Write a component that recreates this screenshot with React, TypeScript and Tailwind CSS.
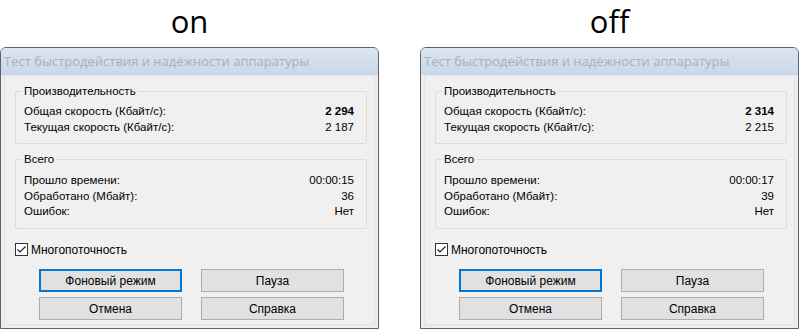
import React from "react";

type Row = { label: string; value: string; bold?: boolean };

const panels = [
    {
        title: "on",
        perf: [
            { label: "Общая скорость (Кбайт/с):", value: "2 294", bold: true },
            { label: "Текущая скорость (Кбайт/с):", value: "2 187" },
        ],
        total: [
            { label: "Прошло времени:", value: "00:00:15" },
            { label: "Обработано (Мбайт):", value: "36" },
            { label: "Ошибок:", value: "Нет" },
        ],
    },
    {
        title: "off",
        perf: [
            { label: "Общая скорость (Кбайт/с):", value: "2 314", bold: true },
            { label: "Текущая скорость (Кбайт/с):", value: "2 215" },
        ],
        total: [
            { label: "Прошло времени:", value: "00:00:17" },
            { label: "Обработано (Мбайт):", value: "39" },
            { label: "Ошибок:", value: "Нет" },
        ],
    },
];

function Group({ caption, rows, className }: { caption: string; rows: Row[]; className: string }) {
    return (
        <div className={`relative ml-[10px] mr-[7px] border border-[#dcdcdc] rounded-[2px] ${className}`}>
            <span className="absolute -top-[9px] left-[6px] bg-[#f0f0f0] px-[2px] leading-[16px]">{caption}</span>
            <div className="flex flex-col">
                {rows.map((r) => (
                    <div key={r.label} className="flex justify-between pl-[8px] pr-[12px] h-[15.5px] leading-[15px]">
                        <span>{r.label}</span>
                        <span className={r.bold ? "font-bold" : ""}>{r.value}</span>
                    </div>
                ))}
            </div>
        </div>
    );
}

function Button({ label, active }: { label: string; active?: boolean }) {
    return (
        <div
            className={`w-[143px] h-[23px] flex items-center justify-center bg-[#e1e1e1] border ${
                active ? "border-[#0078d7] shadow-[inset_0_0_0_1px_#0078d7]" : "border-[#adadad]"
            }`}
        >
            {label}
        </div>
    );
}

export default function App() {
    return (
        <div className="w-[800px] h-[330px] bg-white flex gap-[41px] font-['Liberation_Sans',Arial,sans-serif] text-[11.5px] text-black">
            {panels.map((p) => (
                <div key={p.title} className="w-[379px] flex flex-col">
                    <div className="h-[47px] flex items-center justify-center font-['Open_Sans',sans-serif] text-[31px] leading-none pb-[4px]">
                        {p.title}
                    </div>
                    <div className="flex-1 flex flex-col mb-[1px] border border-[#5f6368] rounded-t-[6px] bg-[#eaeef3] p-[3px] pt-0">
                        {/* Title bar */}
                        <div className="h-[27px] flex items-center pl-[3px] bg-gradient-to-b from-[#dce5f0] to-[#c9d7e8] -mx-[3px] rounded-t-[5px] font-['Open_Sans',sans-serif] text-[13px] text-[#a7b0bb]">
                            Тест быстродействия и надёжности аппаратуры
                        </div>
                        <div className="flex-1 bg-[#f0f0f0] border border-[#dde3ea] flex flex-col pt-[15px]">
                            <Group caption="Производительность" rows={p.perf} className="h-[53px] pt-[12px]" />
                            <Group caption="Всего" rows={p.total} className="h-[70px] mt-[15px] pt-[13px]" />
                            <div className="flex items-center mt-[14px] ml-[10px] h-[13px]">
                                <div className="w-[13px] h-[13px] border border-[#333] bg-white flex items-center justify-center">
                                    <svg width="11" height="11" viewBox="0 0 11 11">
                                        <path d="M1.5 5.5 L4 8 L9.5 2.5" fill="none" stroke="#222" strokeWidth="1.2" />
                                    </svg>
                                </div>
                                <span className="ml-[3px] text-[12px]">Многопоточность</span>
                            </div>
                            <div className="grid grid-cols-[143px_143px] gap-x-[19px] gap-y-[5px] ml-[34px] mt-[13px] text-[12px]">
                                <Button label="Фоновый режим" active />
                                <Button label="Пауза" />
                                <Button label="Отмена" />
                                <Button label="Справка" />
                            </div>
                        </div>
                    </div>
                </div>
            ))}
        </div>
    );
}
